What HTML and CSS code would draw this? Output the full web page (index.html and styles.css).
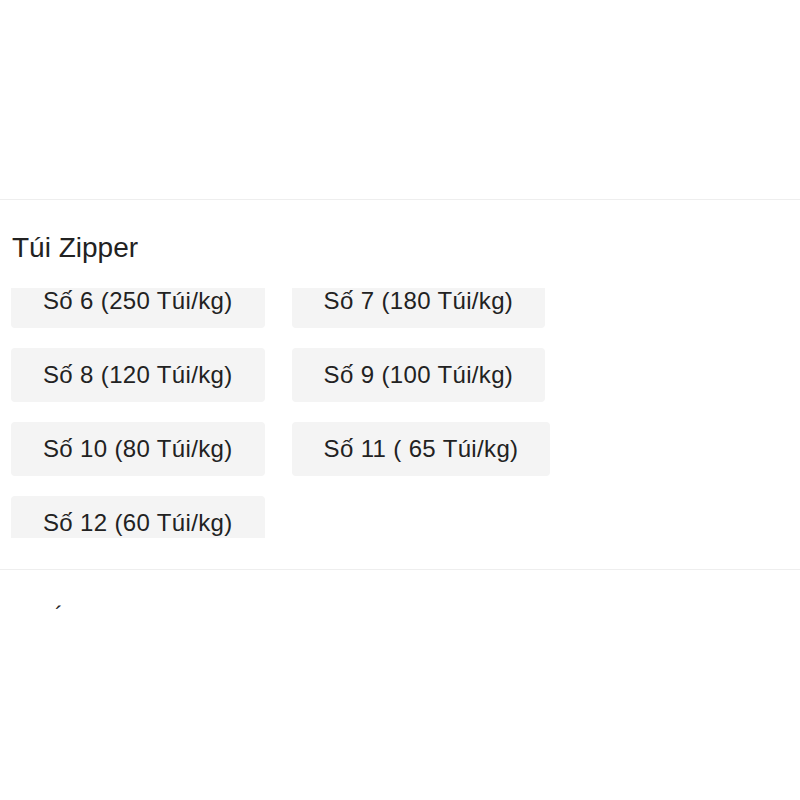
FILE: index.html
```html
<!DOCTYPE html>
<html lang="vi">
<head>
  <meta charset="UTF-8" />
  <meta name="viewport" content="width=device-width, initial-scale=1.0" />
  <title>Túi Zipper</title>
  <link rel="stylesheet" href="styles.css">
</head>
<body>
  <div class="top-space"></div>

  <section class="option-group">
    <h2 class="option-title">Túi Zipper</h2>
    <div class="option-scroll">
      <div class="option-list">
        <button class="chip">Số 6 (250 Túi/kg)</button>
        <button class="chip">Số 7 (180 Túi/kg)</button>
        <button class="chip">Số 8 (120 Túi/kg)</button>
        <button class="chip">Số 9 (100 Túi/kg)</button>
        <button class="chip">Số 10 (80 Túi/kg)</button>
        <button class="chip">Số 11 ( 65 Túi/kg)</button>
        <button class="chip">Số 12 (60 Túi/kg)</button>
      </div>
    </div>
  </section>

  <section class="next-group">
    <span class="accent">´</span>
  </section>
</body>
</html>
```

FILE: styles.css
```css
body {
  margin: 0;
  font-family: 'Liberation Sans', Arial, sans-serif;
  background: #fff;
  color: #222;
}
.top-space {
  height: 199px;
}
.option-group {
  border-top: 1px solid #eeeeee;
  padding: 31px 0 31px 11px;
}
.option-title {
  margin: 0 0 0 1px;
  font-size: 28px;
  font-weight: normal;
  line-height: 34px;
  color: #222;
}
.option-scroll {
  margin-top: 23px;
  height: 250px;
  overflow: hidden;
}
.option-list {
  margin-top: -14px;
  width: 570px;
  display: flex;
  flex-wrap: wrap;
  gap: 20px 27px;
}
.chip {
  height: 54px;
  padding: 0 32px;
  border: none;
  border-radius: 4px;
  background: #f4f4f4;
  color: #222;
  font-family: inherit;
  font-size: 24px;
  letter-spacing: 0.35px;
  line-height: 54px;
  cursor: pointer;
}

/* Nhóm tiếp theo */
.next-group {
  border-top: 1px solid #eeeeee;
  padding: 31px 0 0 55px;
}
.accent {
  font-size: 24px;
  line-height: 27px;
  color: #222;
}
```
